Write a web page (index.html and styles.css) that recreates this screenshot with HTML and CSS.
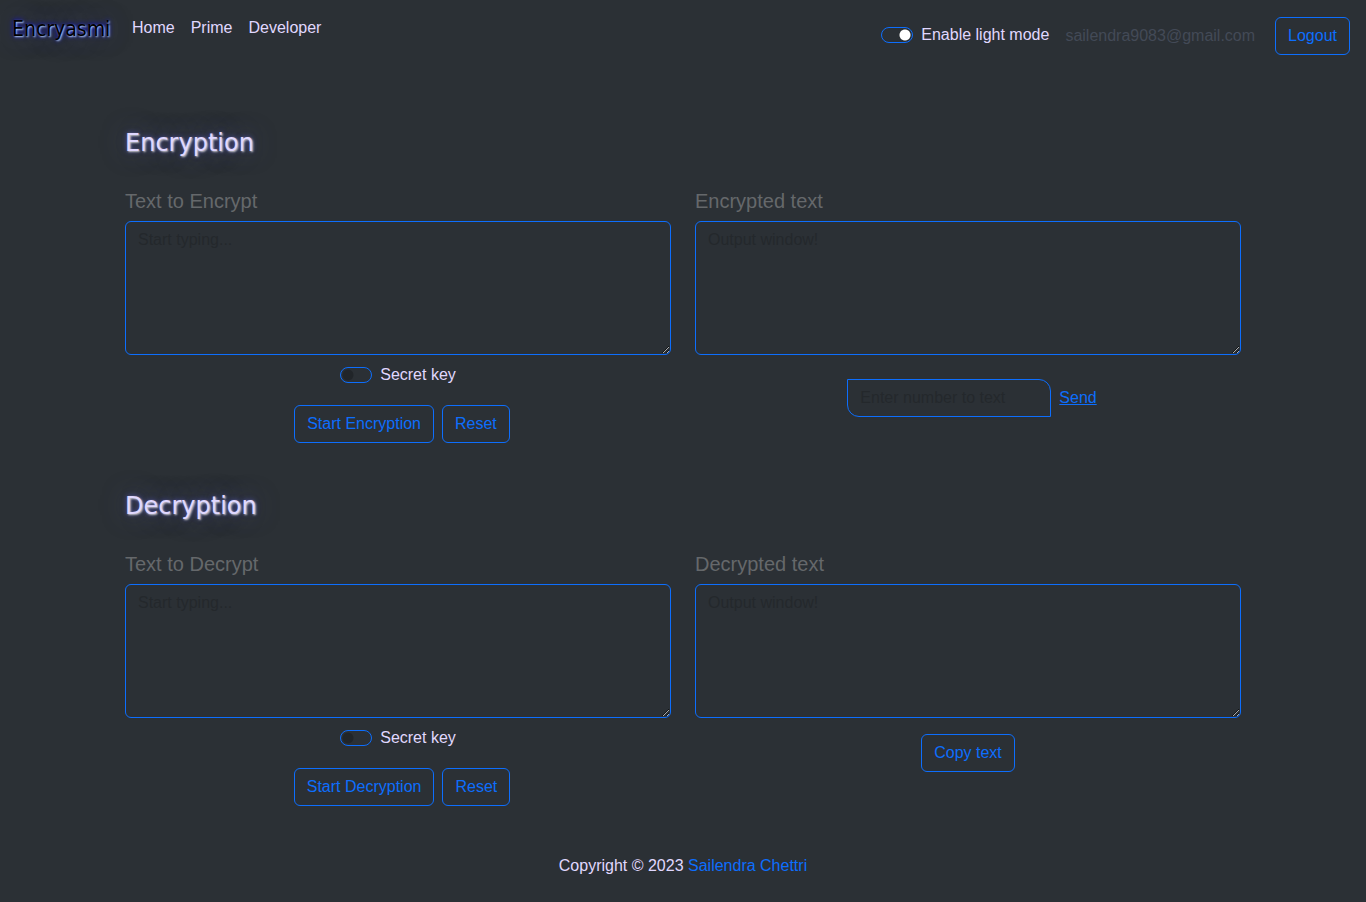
FILE: index.html
```html
<!DOCTYPE html>
<html lang="en">
<head>
<meta charset="utf-8">
<meta name="viewport" content="width=device-width, initial-scale=1">
<title>Encryasmi</title>
<link rel="stylesheet" href="styles.css">
</head>
<body>
<header class="navbar">
  <a class="brand" href="#">Encryasmi</a>
  <nav class="nav-links">
    <a href="#">Home</a>
    <a href="#">Prime</a>
    <a href="#">Developer</a>
  </nav>
  <div class="account">
    <div class="switch">
      <input type="checkbox" role="switch" id="mode" checked>
      <label for="mode">Enable light mode</label>
    </div>
    <span class="email">sailendra9083@gmail.com</span>
    <button class="btn" type="button">Logout</button>
  </div>
</header>

<main class="container">
  <section class="panel">
    <h1 class="title">Encryption</h1>
    <div class="columns">
      <div class="column">
        <label class="field-label" for="enc-in">Text to Encrypt</label>
        <textarea class="field" id="enc-in" rows="5" placeholder="Start typing..."></textarea>
        <div class="switch switch-key">
          <input type="checkbox" role="switch" id="enc-key">
          <label for="enc-key">Secret key</label>
        </div>
        <div class="actions">
          <button class="btn" type="button">Start Encryption</button>
          <button class="btn" type="button">Reset</button>
        </div>
      </div>
      <div class="column">
        <label class="field-label" for="enc-out">Encrypted text</label>
        <textarea class="field" id="enc-out" rows="5" placeholder="Output window!"></textarea>
        <div class="send">
          <input class="field number" type="text" aria-label="Phone number" placeholder="Enter number to text">
          <a href="#">Send</a>
        </div>
      </div>
    </div>
  </section>

  <section class="panel">
    <h1 class="title">Decryption</h1>
    <div class="columns">
      <div class="column">
        <label class="field-label" for="dec-in">Text to Decrypt</label>
        <textarea class="field" id="dec-in" rows="5" placeholder="Start typing..."></textarea>
        <div class="switch switch-key">
          <input type="checkbox" role="switch" id="dec-key">
          <label for="dec-key">Secret key</label>
        </div>
        <div class="actions">
          <button class="btn" type="button">Start Decryption</button>
          <button class="btn" type="button">Reset</button>
        </div>
      </div>
      <div class="column">
        <label class="field-label" for="dec-out">Decrypted text</label>
        <textarea class="field" id="dec-out" rows="5" placeholder="Output window!"></textarea>
        <div class="copy">
          <button class="btn" type="button">Copy text</button>
        </div>
      </div>
    </div>
  </section>
</main>

<footer class="footer">Copyright © 2023 <a href="#">Sailendra Chettri</a></footer>
</body>
</html>
```
FILE: styles.css
```css
* {
  box-sizing: border-box;
}

body {
  margin: 0;
  background: #2b3035;
  color: #e0d8ff;
  font: 16px/24px "Liberation Sans", Arial, sans-serif;
}

a {
  color: #0d6efd;
}

.navbar {
  display: flex;
  align-items: flex-start;
  padding: 12px 16px 12px 12px;
}

.brand {
  width: 96px;
  margin: 2px 24px 0 0;
  color: #000;
  font-family: "DejaVu Sans Condensed", "DejaVu Sans", sans-serif;
  font-size: 21px;
  line-height: 31px;
  text-decoration: none;
  text-shadow: 1px 1px 2px #bcd8ff, 0 0 25px rgba(90, 90, 190, 0.5), 0 0 5px blue;
}

.nav-links {
  display: flex;
  gap: 16px;
  padding-top: 4px;
}

.nav-links a {
  color: inherit;
  text-decoration: none;
}

.account {
  display: flex;
  align-items: center;
  margin-left: auto;
  padding-top: 5px;
}

.email {
  margin: 0 20px 0 16px;
  color: #434a57;
}

.switch {
  display: flex;
  align-items: center;
  gap: 8px;
}

.switch input {
  appearance: none;
  width: 32px;
  height: 16px;
  margin: 0;
  border: 1px solid #0d6efd;
  border-radius: 16px;
  background: radial-gradient(circle at 7px 7px, #212529 5px, transparent 6px);
}

.switch input:checked {
  background: radial-gradient(circle at 23px 7px, #fff 5px, transparent 6px);
}

.account .switch {
  margin-bottom: 2px;
}

.switch-key {
  justify-content: center;
  margin-top: 8px;
}

.btn {
  padding: 6px 12px;
  border: 1px solid #0d6efd;
  border-radius: 6px;
  background: transparent;
  color: #0d6efd;
  font: inherit;
}

.container {
  max-width: 1140px;
  margin: 0 auto;
  padding: 61px 12px 0;
}

.panel {
  margin-bottom: 48px;
}

.title {
  margin: 0 0 30px;
  font-family: "DejaVu Sans", sans-serif;
  font-size: 24px;
  font-weight: 500;
  line-height: 31px;
  text-shadow: 1px 1px 2px #ccc, 0 0 25px rgba(110, 110, 200, 0.5), 0 0 5px rgba(100, 100, 255, 0.6);
}

.columns {
  display: grid;
  grid-template-columns: 1fr 1fr;
  gap: 24px;
}

.field-label {
  display: block;
  margin-bottom: 8px;
  color: #65686b;
  font-size: 20px;
}

.field {
  display: block;
  width: 100%;
  padding: 6px 12px;
  border: 1px solid #0d6efd;
  border-radius: 6px;
  background: transparent;
  color: inherit;
  font: inherit;
}

.field::placeholder {
  color: #24282c;
  opacity: 1;
}

.actions {
  display: flex;
  justify-content: center;
  gap: 8px;
  margin-top: 18px;
  padding-left: 8px;
}

.send {
  display: flex;
  align-items: center;
  justify-content: center;
  gap: 8px;
  margin-top: 24px;
  padding-left: 8px;
}

.number {
  width: 204px;
  border-radius: 0 12px;
}

.copy {
  margin-top: 16px;
  text-align: center;
}

.footer {
  padding-bottom: 24px;
  text-align: center;
}

.footer a {
  text-decoration: none;
}
```
